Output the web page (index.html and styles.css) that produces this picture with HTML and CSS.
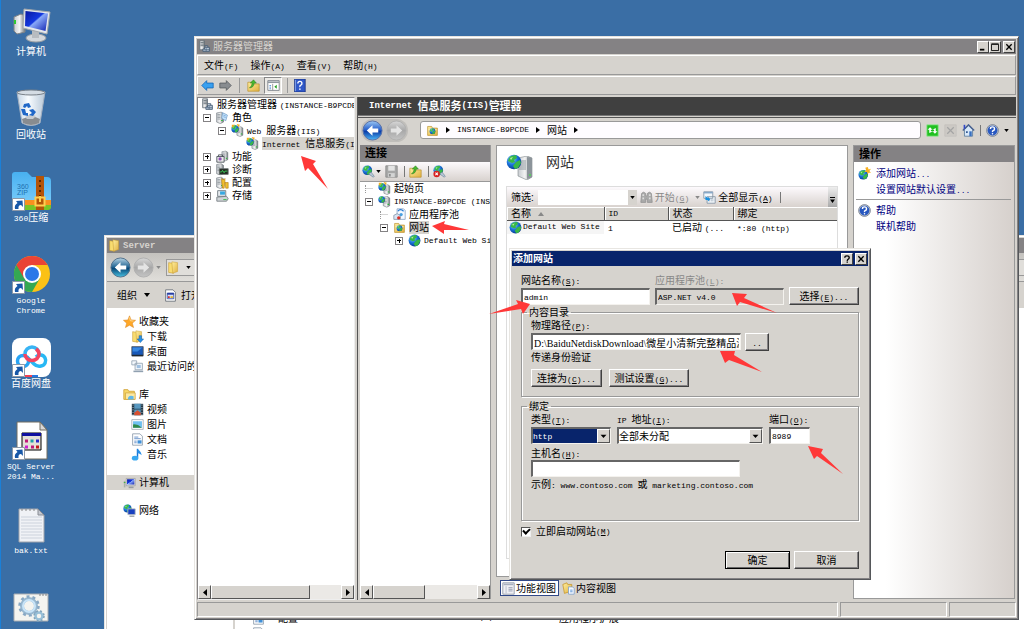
FILE: index.html
```html
<!DOCTYPE html>
<html lang="zh-CN">
<head>
<meta charset="utf-8">
<title>服务器管理器</title>
<link rel="stylesheet" href="styles.css">
</head>
<body>
<svg class="defs" aria-hidden="true">
  <defs>
    <linearGradient id="gBlue" x1="0" y1="0" x2="0" y2="1"><stop offset="0" stop-color="#9cc8f4"/><stop offset=".45" stop-color="#2a62cc"/><stop offset=".55" stop-color="#0c3ea8"/><stop offset="1" stop-color="#4cb8f8"/></linearGradient>
    <linearGradient id="gTeal" x1="0" y1="0" x2="0" y2="1"><stop offset="0" stop-color="#b8d4e4"/><stop offset=".45" stop-color="#2c6c98"/><stop offset=".55" stop-color="#084878"/><stop offset="1" stop-color="#48c0e0"/></linearGradient>
    <linearGradient id="gGrey" x1="0" y1="0" x2="0" y2="1"><stop offset="0" stop-color="#d8d8d8"/><stop offset=".5" stop-color="#a8a8a8"/><stop offset="1" stop-color="#c4c4c4"/></linearGradient>
    <linearGradient id="gScreen" x1="0" y1="0" x2="1" y2="1"><stop offset="0" stop-color="#0818a0"/><stop offset=".45" stop-color="#1438e0"/><stop offset=".5" stop-color="#88a8f8"/><stop offset="1" stop-color="#1020b0"/></linearGradient>
    <linearGradient id="gTower" x1="0" y1="0" x2="1" y2="0"><stop offset="0" stop-color="#c8ccd0"/><stop offset=".5" stop-color="#f4f4f4"/><stop offset="1" stop-color="#70787c"/></linearGradient>
    <linearGradient id="gFolder" x1="0" y1="0" x2="1" y2="1"><stop offset="0" stop-color="#fff0a0"/><stop offset="1" stop-color="#e0b040"/></linearGradient>
    <linearGradient id="gGlass" x1="0" y1="0" x2="1" y2="0"><stop offset="0" stop-color="#c4d4e4"/><stop offset=".4" stop-color="#f8fcff"/><stop offset="1" stop-color="#b8c8d8"/></linearGradient>
    <linearGradient id="gZip" x1="0" y1="0" x2="0" y2="1"><stop offset="0" stop-color="#48b0f0"/><stop offset="1" stop-color="#80d0fc"/></linearGradient>
    <radialGradient id="gGlobe" cx=".35" cy=".3" r=".8"><stop offset="0" stop-color="#90d8ff"/><stop offset=".5" stop-color="#1870d8"/><stop offset="1" stop-color="#083080"/></radialGradient>

    <symbol id="globe" viewBox="0 0 16 16"><circle cx="8" cy="8" r="7.3" fill="url(#gGlobe)"/><path d="M5 2l5-1 1 3-3 2 1 2-3 1-4-2 1-3zM10 8l4-2 1 3-3 5-3 1-2-3z" fill="#38b848"/><path d="M4 4l3-1-2 3z" fill="#b8f0a0"/></symbol>
    <symbol id="tower" viewBox="0 0 16 16"><path d="M4 2l6-1 3 2v11l-4 2-5-2z" fill="url(#gTower)" stroke="#606870" stroke-width=".7"/><path d="M5 4h4M5 6h4M5 8h4M5 10h4" stroke="#8a9298"/><path d="M10 12h2" stroke="#20c030" stroke-width="1.5"/></symbol>
    <symbol id="bigtower" viewBox="0 0 16 24"><path d="M1 2l9-2 5 2v19l-5 3-9-4z" fill="url(#gTower)" stroke="#80888c" stroke-width=".6"/><path d="M10 1v22l5-2V2z" fill="#8c949a"/><path d="M2 5h7M2 7h7M2 9h7M2 11h7M2 13h7" stroke="#90989e"/><path d="M12 19h2" stroke="#50d850" stroke-width="1.500"/></symbol>
    <symbol id="folder" viewBox="0 0 16 16"><path d="M2 3h5l1 2h6v9H2z" fill="url(#gFolder)" stroke="#b88c28" stroke-width=".8"/><path d="M3 7h10" stroke="#fff4b8"/></symbol>
    <symbol id="folders" viewBox="0 0 16 16"><path d="M2 2l6 1v12l-6-1z" fill="#f8dc70" stroke="#c09020" stroke-width=".6"/><path d="M6 1l7 1v11l-6 2z" fill="url(#gFolder)" stroke="#c89c30" stroke-width=".6"/></symbol>
    <symbol id="servers" viewBox="0 0 16 16"><path d="M2 1h6v11H2z" fill="url(#gTower)" stroke="#68727a"/><path d="M3 3h4M3 5h4M3 7h4" stroke="#58646c"/><path d="M8 9h6v5H6v-3h2zM8 7h4v2" fill="#b8c8d8" stroke="#405870"/><path d="M7 12h7M10 10v4" stroke="#506880"/></symbol>
    <symbol id="role" viewBox="0 0 16 16"><use href="#tower" x="-3" width="15" height="16"/><path d="M8 2l6 3-2 7-5-3z" fill="#c8e4fc" stroke="#6090c0" stroke-width=".8"/><path d="M9 5l3 1M9 7l3 1" stroke="#4080c0" stroke-width=".6"/></symbol>
    <symbol id="iis" viewBox="0 0 16 16"><use href="#tower" x="4" y="2" width="13" height="14"/><use href="#globe" x="0" y="1" width="10" height="10"/><path d="M1 1h4L1 5zM7 0l4 1-2 3z" fill="#f0b020"/></symbol>
    <symbol id="instance" viewBox="0 0 16 16"><use href="#tower" x="3" width="14" height="16"/><use href="#globe" x="0" y="1" width="9" height="9"/></symbol>
    <symbol id="feature" viewBox="0 0 16 16"><use href="#tower" x="4" width="13" height="14"/><path d="M1 8h9v7H1z" fill="#e8e8e8" stroke="#404850"/><path d="M3 8V6h5v2" fill="none" stroke="#404850"/><circle cx="5" cy="11" r="2" fill="#9050b8"/></symbol>
    <symbol id="diag" viewBox="0 0 16 16"><use href="#tower" x="-3" width="15" height="15"/><path d="M4 7h11v7H4z" fill="#202820" stroke="#687070"/><path d="M5 11h2l1-2 2 3 1-2h3" fill="none" stroke="#40e060"/></symbol>
    <symbol id="config" viewBox="0 0 16 16"><use href="#tower" x="-3" width="15" height="16"/><path d="M7 3l2 2 2-2v4l-1 8H8L7 7zM11 8h4v7h-3z" fill="#f0c030" stroke="#b07810" stroke-width=".7"/></symbol>
    <symbol id="storage" viewBox="0 0 16 16"><path d="M2 2h10v7H2z" fill="#e8ecf0" stroke="#68727a"/><path d="M5 3h6v4H5z" fill="#38a8e0"/><path d="M1 10l12-1 2 3-2 3H1z" fill="#d0d4d8" stroke="#70787c"/><path d="M9 13h4" stroke="#20c030"/></symbol>
    <symbol id="sites" viewBox="0 0 16 16"><use href="#folder" width="16" height="16"/><use href="#globe" x="4" y="5" width="8" height="8"/></symbol>
    <symbol id="pools" viewBox="0 0 16 16"><path d="M5 1h8l2 2v11H5z" fill="#f4f8ff" stroke="#7090b8" stroke-width=".8"/><path d="M6 4q3-4 7 0" fill="none" stroke="#2078d0" stroke-width="1.5"/><path d="M1 9l4-2 4 2v5H1z" fill="#d8e4f4" stroke="#8898a8"/><circle cx="7" cy="12" r="2" fill="#d83028"/><circle cx="10" cy="8" r="2" fill="#48a0e0"/></symbol>
    <symbol id="up" viewBox="0 0 16 16"><path d="M1 4h6l1 2h7v9H1z" fill="url(#gFolder)" stroke="#b88c28" stroke-width=".8"/><path d="M3 11q5 0 6-6h2.500L8 1 4 5h2.500Q6 9 3 11z" fill="#48b830" stroke="#287818" stroke-width=".6"/></symbol>
    <symbol id="left" viewBox="0 0 16 16"><path d="M1 8l6-6v3h8v6H7v3z" fill="#38a0f0" stroke="#1468b8"/></symbol>
    <symbol id="right" viewBox="0 0 16 16"><path d="M15 8L9 2v3H1v6h8v3z" fill="#888c90" stroke="#585c60"/></symbol>
    <symbol id="pane" viewBox="0 0 16 16"><path d="M1 2h14v12H1z" fill="#fff" stroke="#707880"/><path d="M1 4h14" stroke="#9098a0" stroke-width="2"/><path d="M3 8h2M3 10h2M3 12h2" stroke="#4080d0"/><path d="M7 6v8" stroke="#888"/><path d="M12 7v5l-3-2.500z" fill="#20a020"/></symbol>
    <symbol id="help" viewBox="0 0 16 16"><circle cx="8" cy="8" r="7.300" fill="#b8c0cc" stroke="#788090"/><circle cx="8" cy="8" r="6" fill="#2858c0"/><path d="M5.500 6q0-2.500 2.500-2.500T10.500 6q0 1.500-1.500 2T8 10" fill="none" stroke="#fff" stroke-width="1.700"/><circle cx="8" cy="12" r="1" fill="#fff"/></symbol>
    <symbol id="book" viewBox="0 0 16 16"><path d="M2 0h13v16H2z" fill="#3058c8" stroke="#183080"/><path d="M3 1v14" stroke="#90b0f0"/><path d="M6 5.500q0-2.500 2.500-2.500T11 5.500q0 1.500-1.500 2T8.500 10" fill="none" stroke="#fff" stroke-width="1.600"/><circle cx="8.500" cy="12.500" r="1" fill="#fff"/></symbol>
    <symbol id="connect" viewBox="0 0 16 16"><use href="#globe" width="13" height="13"/><path d="M8 11l3-2 2 2 2 3-1 1-3-2z" fill="#b8c8d8" stroke="#607890" stroke-width=".7"/></symbol>
    <symbol id="disconnect" viewBox="0 0 16 16"><use href="#connect" width="16" height="16"/><circle cx="4.500" cy="11" r="4" fill="#d82020"/><path d="M3 9.500l3 3m0-3l-3 3" stroke="#fff" stroke-width="1.300"/></symbol>
    <symbol id="save" viewBox="0 0 16 16"><path d="M1 1h14v14H1z" fill="#a8a8a8" stroke="#888"/><path d="M4 1h8v6H4z" fill="#e4e4e4"/><path d="M4 10h8v5H4z" fill="#d4d4d4"/><path d="M6 11v3" stroke="#888" stroke-width="2"/></symbol>
    <symbol id="refresh" viewBox="0 0 16 16"><path d="M1 1h14v14H1z" fill="#20c020" stroke="#90e890"/><path d="M4 11V7H2l3-3 3 3H6v2h3M12 5v4h2l-3 3-3-3h2V7H8" fill="#fff"/></symbol>
    <symbol id="stop" viewBox="0 0 16 16"><path d="M1 1h14v14H1z" fill="#ccc9c4" stroke="#c4c2be"/><path d="M4 4l8 8m0-8l-8 8" stroke="#a4a4a4" stroke-width="1.500"/></symbol>
    <symbol id="home" viewBox="0 0 16 16"><path d="M3 7l5-5 5 5v8H3z" fill="#d8e8f8" stroke="#587898"/><path d="M1 8l7-7 7 7" fill="none" stroke="#486090" stroke-width="1.700"/><path d="M3 1v5" stroke="#3048c8" stroke-width="2"/><path d="M9 9h3v6H9z" fill="#3870c0"/><path d="M5 9h2v2H5z" fill="#28508c"/></symbol>
    <symbol id="addsite" viewBox="0 0 16 16"><use href="#globe" y="3" width="13" height="13"/><path d="M12 0l1 3 3-1-2 3 2 2-3 0-1 2-1-3-3 0 2-2-1-3z" fill="#f8b020"/></symbol>
    <symbol id="find" viewBox="0 0 16 16"><path d="M2 3q2-3 5 0v3h2V3q3-3 5 0l1 11H9v-4H7v4H1z" fill="#aaa" stroke="#929292"/><path d="M3 9h2M11 9h2M3 5h2M11 5h2" stroke="#ddd" stroke-width="2"/></symbol>
    <symbol id="showall" viewBox="0 0 16 16"><path d="M1 1h11v8H1zM5 7h10v8H5z" fill="#f4f8fc" stroke="#8090a0"/><path d="M1 2h11" stroke="#88a8c8" stroke-width="2"/><path d="M7 10h7M7 12h7" stroke="#98a8b8" stroke-dasharray="2 1"/><path d="M3 6v5h3v2l3-3-3-3v2" fill="#1890e0"/></symbol>
    <symbol id="feat" viewBox="0 0 16 16"><path d="M1 1h14v14H1z" fill="#f0f0f4" stroke="#8890a0"/><path d="M2 3h12" stroke="#a8b0c0" stroke-width="2"/><path d="M5 5v9" stroke="#b0b8c8"/><path d="M8 7h5M8 9h5M8 11h5" stroke="#8890a8"/></symbol>
    <symbol id="content" viewBox="0 0 16 16"><path d="M1 3l5-2 1 2h5v8L3 14z" fill="url(#gFolder)" stroke="#c89830"/><path d="M8 6h5l2 2v7H8z" fill="#f4f8ff" stroke="#80a0c8"/><path d="M10 10h3M10 12h3" stroke="#4888d0"/></symbol>
    <symbol id="star" viewBox="0 0 16 16"><path d="M8 1l2 5 5.500.5-4 3.500 1.500 5.500L8 12.500 3 15.500 4.500 10 .5 6.500 6 6z" fill="#ffa828" stroke="#d88018" stroke-width=".6"/><path d="M8 3l1 4 4 .5" fill="none" stroke="#ffe0a0"/></symbol>
    <symbol id="download" viewBox="0 0 16 16"><use href="#folders" width="16" height="16"/><path d="M10 7h3v4h2.500l-4 4.500-4-4.500H10z" fill="#2890e8" stroke="#1060a8" stroke-width=".6"/></symbol>
    <symbol id="desk" viewBox="0 0 16 16"><path d="M1 2h14v11H1z" fill="#1858b8" stroke="#505860"/><path d="M2 3h12L8 8H2z" fill="#3888e0"/><path d="M1 13h14" stroke="#202830" stroke-width="2"/></symbol>
    <symbol id="recent" viewBox="0 0 16 16"><path d="M1 1h6v5H1zM5 4h9v8H5z" fill="#f4f8fc" stroke="#90a0b0"/><path d="M7 6h5v4H7z" fill="#a0c0e0"/><path d="M3 14h12" stroke="#90a0b0" stroke-width="2"/></symbol>
    <symbol id="library" viewBox="0 0 16 16"><path d="M1 2h5l1 2h7v10H1z" fill="#f8d868" stroke="#d0a030"/><path d="M3 6h12v8H3z" fill="#fce8a0" stroke="#d0a840"/><path d="M6 14q0-6 7-4v4" fill="#60b8e8"/></symbol>
    <symbol id="video" viewBox="0 0 16 16"><path d="M1 1h14v14H1z" fill="#203848"/><path d="M4 1h8v6H4zM4 8h8v7H4z" fill="#5898c0"/><path d="M4 12l4-3 4 3v3H4z" fill="#d85030"/><path d="M2.500 2v13M13.500 2v13" stroke="#fff" stroke-dasharray="1 2"/></symbol>
    <symbol id="picture" viewBox="0 0 16 16"><path d="M1 2h14v12H1z" fill="#fff" stroke="#a0a8b0"/><path d="M2.500 4h11v8h-11z" fill="#70c0f0"/><path d="M2.500 12V8q5-1 11 4z" fill="#308848"/></symbol>
    <symbol id="doc" viewBox="0 0 16 16"><path d="M2 1h9l3 3v11H2z" fill="#fff" stroke="#8898a8"/><path d="M4 5h5M4 7h8M4 10h3M4 12h3" stroke="#5080c0"/><path d="M8 9h5v4H8z" fill="#4090d8"/></symbol>
    <symbol id="music" viewBox="0 0 16 16"><path d="M8 1v11" stroke="#1878d8" stroke-width="1.800"/><path d="M8 1q5 4 5 8-1-2-5-3z" fill="#2890e8"/><ellipse cx="5" cy="12.500" rx="4" ry="3" fill="#38a8f0"/></symbol>
    <symbol id="pcsmall" viewBox="0 0 16 16"><path d="M4 3h11v9H4z" fill="#e8e8e8" stroke="#787c80" stroke-width=".6"/><path d="M5 4h9v6.500H5z" fill="url(#gScreen)"/><path d="M1 6h2v8H1z" fill="#a8b0a8"/><path d="M1 8h2" stroke="#30b030"/><path d="M7 14h6" stroke="#989ca0" stroke-width="2"/></symbol>
    <symbol id="network" viewBox="0 0 16 16"><use href="#globe" width="11" height="11"/><path d="M6 6h9v7H6z" fill="#1840c0" stroke="#b0b8c0"/><path d="M8 15h6" stroke="#90989c" stroke-width="1.500"/></symbol>
    <symbol id="app" viewBox="0 0 16 16"><path d="M2 1h9l3 3v11H2z" fill="#fff" stroke="#606870"/><path d="M4 5h8v7H4z" fill="#dce4f8" stroke="#3048a0"/><path d="M4 6h8" stroke="#2038a0" stroke-width="2"/><path d="M5 10h2" stroke="#d82020" stroke-width="2"/><path d="M8 10h3" stroke="#e0b020" stroke-width="2"/></symbol>
    <symbol id="shortcut" viewBox="0 0 13 13"><path d="M.5.5h12v12H.5z" fill="#fff" stroke="#8c98a8"/><path d="M3 11Q2 7 5.500 5L4 3l6.500-.5.500 6.500L9 7Q6 7 6.500 11z" fill="#1858a8"/></symbol>
    <symbol id="caret" viewBox="0 0 6 4"><path d="M0 0h6L3 4z"/></symbol>
    <symbol id="navback" viewBox="0 0 22 22"><circle cx="11" cy="11" r="10" fill="url(#gBlue)" stroke="#5870a8"/><path d="M5 11l6-5.500v3.500h6v4h-6v3.500z" fill="#fff"/></symbol>
    <symbol id="navteal" viewBox="0 0 22 22"><circle cx="11" cy="11" r="10" fill="url(#gTeal)" stroke="#50708c"/><path d="M5 11l6-5.500v3.500h6v4h-6v3.500z" fill="#fff"/></symbol>
    <symbol id="navfwd" viewBox="0 0 22 22"><circle cx="11" cy="11" r="10" fill="url(#gGrey)" stroke="#b0b0b0"/><path d="M17 11l-6-5.500v3.500H5v4h6v3.500z" fill="#e4e4e4"/></symbol>
  </defs>
</svg>

<main class="desktop">
  <ul class="shortcuts">
    <li>
      <svg class="big" viewBox="0 0 40 40"><path d="M3 12l7-3 4 2v16l-8 2-3-3z" fill="url(#gTower)" stroke="#808488"/><path d="M4 15v4" stroke="#30c830" stroke-width="2"/><ellipse cx="25" cy="33" rx="10" ry="4" fill="#d4d8dc" stroke="#9ca0a4"/><path d="M21 25l7 1v7h-7z" fill="#b8bcc0"/><path d="M13 4l26 3-3 22-24-6z" fill="#e4e8ec" stroke="#a4a8ac"/><path d="M14.500 6L37 8.500 34.500 26 14 21z" fill="url(#gScreen)"/></svg>
      <span class="name">计算机</span>
    </li>
    <li>
      <svg class="big" viewBox="0 0 40 40"><path d="M6 4l5 31q9 5 18 0l5-31z" fill="url(#gGlass)" stroke="#a4b0c0"/><path d="M11 31q10-5 18 0l-1 4q-8 4-16 0z" fill="#888c90"/><path d="M14 29q6-5 11-1l-3 3h-6z" fill="#c8ccd0"/><ellipse cx="20" cy="4.500" rx="14" ry="2.500" fill="#d4dce4" stroke="#788088"/><path d="M13 16l5-1 2 4-3 1-1-2-2 2-2-1zM10 21l4 0 1 4 2 0v3l-5-1zM18 22l4-1 3 3-3 4-4-1 3-2z" fill="#2068c8"/></svg>
      <span class="name">回收站</span>
    </li>
    <li>
      <svg class="big" viewBox="0 0 40 40"><path d="M1 4q0-3 3-3h12l5 5h15q4 0 4 4v25q0 3-3 3H1z" fill="url(#gZip)"/><path d="M1 29h39v5H1z" fill="#f89020"/><path d="M1 34h39v2q0 3-3 3H1z" fill="#78c428"/><path d="M25 5h8v34h-8z" fill="#b45408"/><path d="M29 9v18" stroke="#582800" stroke-width="2" stroke-dasharray="2 3"/><path d="M24.500 26.500h9v8h-9z" fill="none" stroke="#ffd050" stroke-width="2"/><path d="M29 25v6" stroke="#ffd050" stroke-width="2"/><text x="6" y="18" class="zip">360</text><text x="6" y="24" class="zip">ZIP</text><use href="#shortcut" x="1" y="27" width="13" height="13"/></svg>
      <span class="name"><span class="l">360</span>压缩</span>
    </li>
    <li>
      <svg class="big" viewBox="0 0 40 40"><circle cx="21" cy="20" r="18" fill="#fbc116"/><path d="M21 20L5.400 11A18 18 0 0 0 21 38l7.800-13.500z" fill="#34a853"/><path d="M5.400 11A18 18 0 0 1 36.600 11H21l-7.800 13.500z" fill="#ea4335"/><circle cx="21" cy="20" r="9" fill="#fff"/><circle cx="21" cy="20" r="7" fill="#2b78e8"/><use href="#shortcut" x="1" y="27" width="13" height="13"/></svg>
      <span class="name"><span class="l">Google<br>Chrome</span></span>
    </li>
    <li>
      <svg class="big" viewBox="0 0 40 40"><rect x="1" y="1" width="39" height="39" rx="8" fill="#fff"/><circle cx="12" cy="24" r="5.500" fill="none" stroke="#28a4f4" stroke-width="3.500"/><path d="M16 20l7 7q3 3 7 2a5.500 5.500 0 1 0-5-9" fill="none" stroke="#28b8f4" stroke-width="3.500"/><path d="M14 17a7 7 0 1 1 14 0" fill="none" stroke="#38b4f4" stroke-width="3.500"/><path d="M14 17a7 6.500 0 0 0 14 0q0-3-3-5" fill="none" stroke="#f44460" stroke-width="3.500"/><path d="M14 38h7v2h-7z" fill="#f04050"/><path d="M21 38h6v2h-6z" fill="#2878e0"/><use href="#shortcut" x="1" y="27" width="13" height="13"/></svg>
      <span class="name">百度网盘</span>
    </li>
    <li>
      <svg class="big" viewBox="0 0 40 40"><path d="M6 2h23l7 8v29H6z" fill="#fff" stroke="#706c60"/><path d="M29 2v8h7z" fill="#d8d8d8" stroke="#706c60"/><path d="M11 13h19v17H11z" fill="#e4e0d8" stroke="#000"/><path d="M11 14.500h19" stroke="#1010a0" stroke-width="3"/><g stroke-width="3"><path d="M14 21h3M20 27h3" stroke="#c01878"/><path d="M19.500 21h3" stroke="#20a0a8"/><path d="M25 21h3" stroke="#2828c8"/><path d="M14 27h3" stroke="#d020d0"/><path d="M25 27h3" stroke="#c01818"/></g><use href="#shortcut" x="1" y="27" width="13" height="13"/></svg>
      <span class="name"><span class="l">SQL Server<br>2014 Ma...</span></span>
    </li>
    <li>
      <svg class="big" viewBox="0 0 40 40"><path d="M8 6h19l6 6v27H8z" fill="#f0f2f6" stroke="#a0a4ac"/><path d="M27 6v6h6z" fill="#c4c8d0" stroke="#888c94"/><path d="M10 7h16" stroke="#888" stroke-dasharray="2 2"/><path d="M10 14h21M10 17h21M10 20h21M10 23h21M10 26h21M10 29h21M10 32h21M10 35h21" stroke="#ccd2dc"/></svg>
      <span class="name"><span class="l">bak.txt</span></span>
    </li>
    <li>
      <svg class="big" viewBox="0 0 40 40"><path d="M3 8h34v27H3z" fill="#f4f4f0" stroke="#a8acb0"/><path d="M28 9h8" stroke="#808488" stroke-dasharray="2 1"/><circle cx="18" cy="20" r="7" fill="none" stroke="#98b8d0" stroke-width="4"/><circle cx="18" cy="20" r="9.500" fill="none" stroke="#88a8c4" stroke-width="2.500" stroke-dasharray="3 3"/><circle cx="18" cy="20" r="6" fill="none" stroke="#c8e4f8" stroke-width="2"/><circle cx="28" cy="30" r="3.500" fill="none" stroke="#98c0d8" stroke-width="2.500"/><circle cx="28" cy="30" r="5" fill="none" stroke="#80a4bc" stroke-width="1.500" stroke-dasharray="2 2"/></svg>
    </li>
  </ul>

  <section class="window explorer" aria-label="Server">
    <header class="titlebar inactive"><svg class="ic"><use href="#folders"/></svg><span class="l title-latin">Server</span></header>
    <div class="ex-nav">
      <svg class="nav-ic"><use href="#navteal"/></svg><svg class="nav-ic"><use href="#navfwd"/></svg><svg class="caret faint"><use href="#caret"/></svg>
      <div class="ex-address"><svg class="ic"><use href="#folders"/></svg><svg class="caret"><use href="#caret"/></svg></div>
    </div>
    <div class="ex-tools"><button class="plain">组织</button><svg class="caret"><use href="#caret"/></svg><svg class="ic app"><use href="#app"/></svg><button class="plain">打开</button></div>
    <div class="ex-body">
      <nav class="ex-side">
        <ul>
          <li><svg class="ic"><use href="#star"/></svg>收藏夹</li>
          <li class="sub"><svg class="ic"><use href="#download"/></svg>下载</li>
          <li class="sub"><svg class="ic"><use href="#desk"/></svg>桌面</li>
          <li class="sub"><svg class="ic"><use href="#recent"/></svg>最近访问的位置</li>
        </ul>
        <ul>
          <li><svg class="ic"><use href="#library"/></svg>库</li>
          <li class="sub"><svg class="ic"><use href="#video"/></svg>视频</li>
          <li class="sub"><svg class="ic"><use href="#picture"/></svg>图片</li>
          <li class="sub"><svg class="ic"><use href="#doc"/></svg>文档</li>
          <li class="sub"><svg class="ic"><use href="#music"/></svg>音乐</li>
        </ul>
        <ul><li class="current"><svg class="ic"><use href="#pcsmall"/></svg>计算机</li></ul>
        <ul><li><svg class="ic"><use href="#network"/></svg>网络</li></ul>
      </nav>
      <div class="ex-files">
        <div class="file"><svg class="ic"><use href="#doc"/></svg><span>配置</span><span class="l">(x)</span><span>应用程序扩展</span></div>
        <div class="file"><svg class="ic"><use href="#doc"/></svg></div>
      </div>
    </div>
  </section>

  <section class="window manager" aria-label="服务器管理器">
    <header class="titlebar inactive"><svg class="ic"><use href="#servers"/></svg><span>服务器管理器</span>
      <div class="sysbuttons">
        <button aria-label="最小化"><svg viewBox="0 0 9 9"><path d="M1 7.500h5" stroke="#000" stroke-width="2"/></svg></button>
        <button aria-label="最大化"><svg viewBox="0 0 9 9"><path d="M.5 1.500h8v7h-8zM.5 1h8" fill="none" stroke="#000"/></svg></button>
        <button class="close" aria-label="关闭"><svg viewBox="0 0 9 9"><path d="M1.500 1.500l6 6m0-6l-6 6" stroke="#000" stroke-width="1.500"/></svg></button>
      </div>
    </header>
    <div class="menubar"><button class="plain">文件<span class="l">(F)</span></button><button class="plain">操作<span class="l">(A)</span></button><button class="plain">查看<span class="l">(V)</span></button><button class="plain">帮助<span class="l">(H)</span></button></div>
    <div class="toolbar">
      <svg class="ic"><use href="#left"/></svg><svg class="ic"><use href="#right"/></svg><i class="sep"></i><svg class="ic"><use href="#up"/></svg><span class="pressed"><svg class="ic"><use href="#pane"/></svg></span><i class="sep tight"></i><svg class="ic"><use href="#book"/></svg>
    </div>
    <div class="mg-body">
      <div class="pane mg-tree">
        <ul class="tree">
          <li><svg class="ic"><use href="#servers"/></svg><span>服务器管理器 <span class="l">(INSTANCE-B9PCDE)</span></span></li>
          <li class="d1"><i class="exp minus"></i><svg class="ic"><use href="#role"/></svg><span>角色</span></li>
          <li class="d2"><i class="exp minus"></i><svg class="ic"><use href="#iis"/></svg><span><span class="l">Web </span>服务器<span class="l">(IIS)</span></span></li>
          <li class="d3"><i class="exp none"></i><svg class="ic"><use href="#iis"/></svg><span class="picked"><span class="l">Internet </span>信息服务<span class="l">(IIS)</span></span></li>
          <li class="d1"><i class="exp plus"></i><svg class="ic"><use href="#feature"/></svg><span>功能</span></li>
          <li class="d1"><i class="exp plus"></i><svg class="ic"><use href="#diag"/></svg><span>诊断</span></li>
          <li class="d1"><i class="exp plus"></i><svg class="ic"><use href="#config"/></svg><span>配置</span></li>
          <li class="d1"><i class="exp plus"></i><svg class="ic"><use href="#storage"/></svg><span>存储</span></li>
        </ul>
        <div class="hscroll wide"><button aria-label="向左"><svg viewBox="0 0 4 7"><path d="M4 0v7L0 3.500z"/></svg></button><i class="thumb"></i><button aria-label="向右"><svg viewBox="0 0 4 7"><path d="M0 0v7l4-3.500z"/></svg></button></div>
      </div>
      <div class="iis">
        <h1 class="iis-title"><span class="l">Internet </span>信息服务<span class="l">(IIS)</span>管理器</h1>
        <div class="iis-nav">
          <div class="pair"><svg class="nav-ic"><use href="#navback"/></svg><svg class="nav-ic"><use href="#navfwd"/></svg></div>
          <div class="crumbs"><svg class="ic"><use href="#sites"/></svg><i class="tri"></i><span class="l">INSTANCE-B9PCDE</span><i class="tri"></i><span>网站</span><i class="tri"></i></div>
          <svg class="ic"><use href="#refresh"/></svg><svg class="ic"><use href="#stop"/></svg><svg class="ic"><use href="#home"/></svg><i class="bar"></i><svg class="ic"><use href="#help"/></svg><svg class="caret"><use href="#caret"/></svg>
        </div>
        <div class="iis-cols">
          <div class="conn">
            <h2 class="panel-title">连接</h2>
            <div class="conn-tools"><svg class="ic"><use href="#connect"/></svg><svg class="caret"><use href="#caret"/></svg><svg class="ic"><use href="#save"/></svg><i class="bar"></i><svg class="ic"><use href="#up"/></svg><i class="bar"></i><svg class="ic"><use href="#disconnect"/></svg></div>
            <ul class="tree dotted">
              <li class="d1"><i class="exp none"></i><svg class="ic"><use href="#iis"/></svg><span>起始页</span></li>
              <li class="d1"><i class="exp minus"></i><svg class="ic"><use href="#instance"/></svg><span class="l">INSTANCE-B9PCDE (INSTANCE)</span></li>
              <li class="d2"><i class="exp none"></i><svg class="ic"><use href="#pools"/></svg><span>应用程序池</span></li>
              <li class="d2"><i class="exp minus"></i><svg class="ic"><use href="#sites"/></svg><span class="picked fit">网站</span></li>
              <li class="d3"><i class="exp plus"></i><svg class="ic"><use href="#globe"/></svg><span class="l">Default Web Site</span></li>
            </ul>
            <div class="hscroll"><button aria-label="向左"><svg viewBox="0 0 4 7"><path d="M4 0v7L0 3.500z"/></svg></button><i class="thumb"></i><button aria-label="向右"><svg viewBox="0 0 4 7"><path d="M0 0v7l4-3.500z"/></svg></button></div>
          </div>
          <div class="center">
            <div class="sheet">
              <div class="sheet-head"><svg viewBox="0 0 28 28"><use href="#bigtower" x="11" y="3" width="16" height="24"/><use href="#globe" x="0" y="1" width="16" height="16"/></svg><h2>网站</h2></div>
              <div class="list">
                <div class="filter"><label for="filter">筛选:</label><span class="filter-box"><input id="filter" type="text"><button aria-label="展开"><svg class="caret"><use href="#caret"/></svg></button></span><svg class="ic"><use href="#find"/></svg><span class="dim">开始<span class="l">(<u>G</u>)</span></span><svg class="caret dimcaret"><use href="#caret"/></svg><svg class="ic"><use href="#showall"/></svg><span>全部显示<span class="l">(<u>A</u>)</span></span><i class="bar"></i><button class="more" aria-label="更多"><svg viewBox="0 0 6 7"><path d="M0 0h6v1H0zM0 3h6L3 7z"/></svg></button></div>
                <table>
                  <thead><tr><th class="c-name">名称 <svg class="sort" viewBox="0 0 6 4"><path d="M0 4h6L3 0z"/></svg></th><th class="c-id"><span class="l">ID</span></th><th class="c-state">状态</th><th>绑定</th></tr></thead>
                  <tbody><tr><td><div class="cell"><svg class="ic"><use href="#globe"/></svg><span class="l">Default Web Site</span></div></td><td><span class="l">1</span></td><td>已启动 <span class="l">(...</span></td><td><span class="l">*:80 (http)</span></td></tr></tbody>
                </table>
              </div>
            </div>
            <div class="views"><button class="view on"><svg class="ic"><use href="#feat"/></svg>功能视图</button><button class="view"><svg class="ic"><use href="#content"/></svg>内容视图</button></div>
          </div>
          <aside class="actions">
            <h2 class="panel-title">操作</h2>
            <ul>
              <li><svg class="ic"><use href="#addsite"/></svg><a href="#add">添加网站<span class="l">...</span></a></li>
              <li class="noicon"><a href="#defaults">设置网站默认设置<span class="l">...</span></a></li>
            </ul>
            <ul>
              <li><svg class="ic"><use href="#help"/></svg><a href="#help-topics">帮助</a></li>
              <li class="noicon"><a href="#online">联机帮助</a></li>
            </ul>
          </aside>
        </div>
      </div>
    </div>
    <footer class="status"><i></i><i></i><i></i></footer>
  </section>

  <form class="window dialog" aria-label="添加网站">
    <header class="titlebar active"><span>添加网站</span>
      <div class="sysbuttons"><button type="button" aria-label="帮助"><svg viewBox="0 0 9 9"><path d="M2 3q0-2 2.500-2T7 3q0 1-1.500 2l-1 1.500" fill="none" stroke="#000" stroke-width="1.500"/><path d="M4 8h1.500" stroke="#000" stroke-width="1.500"/></svg></button><button type="button" class="close" aria-label="关闭"><svg viewBox="0 0 9 9"><path d="M1.500 1.500l6 6m0-6l-6 6" stroke="#000" stroke-width="1.500"/></svg></button></div>
    </header>
    <div class="dlg-body">
      <div class="row top">
        <div class="field"><label for="site">网站名称<span class="l">(<u>S</u>):</span></label><input id="site" class="latin" type="text" value="admin"></div>
        <div class="field"><label class="dim" for="pool">应用程序池<span class="l">(<u>L</u>):</span></label><input id="pool" class="latin" type="text" value="ASP.NET v4.0" readonly></div>
        <button type="button" class="btn pick">选择<span class="l">(<u>E</u>)...</span></button>
      </div>
      <fieldset class="dir">
        <legend>内容目录</legend>
        <label for="path">物理路径<span class="l">(<u>P</u>):</span></label>
        <div class="row path"><input id="path" type="text" value="D:\BaiduNetdiskDownload\微星小清新完整精品源码"><button type="button" class="btn dots"><span class="l">..</span></button></div>
        <p>传递身份验证</p>
        <div class="row auth"><button type="button" class="btn as">连接为<span class="l">(<u>C</u>)...</span></button><button type="button" class="btn test">测试设置<span class="l">(<u>G</u>)...</span></button></div>
      </fieldset>
      <fieldset class="bind">
        <legend>绑定</legend>
        <div class="row binds">
          <div class="field type"><label for="type">类型<span class="l">(<u>T</u>):</span></label><div class="combo hot"><select id="type"><option>http</option></select><svg viewBox="0 0 13 13"><path d="M3 5h7L6.500 9z"/></svg></div></div>
          <div class="field ip"><label for="ip"><span class="l">IP </span>地址<span class="l">(<u>I</u>):</span></label><div class="combo"><select id="ip"><option>全部未分配</option></select><svg viewBox="0 0 13 13"><path d="M3 5h7L6.500 9z"/></svg></div></div>
          <div class="field port"><label for="port">端口<span class="l">(<u>O</u>):</span></label><input id="port" class="latin" type="text" value="8989"></div>
        </div>
        <div class="field host"><label for="host">主机名<span class="l">(<u>H</u>):</span></label><input id="host" type="text"></div>
        <p>示例<span class="l">: www.contoso.com </span>或<span class="l"> marketing.contoso.com</span></p>
      </fieldset>
      <label class="check"><input type="checkbox" checked>立即启动网站<span class="l">(<u>M</u>)</span></label>
      <div class="row ends"><button type="button" class="btn ok">确定</button><button type="button" class="btn">取消</button></div>
    </div>
  </form>

  <svg class="arrows" viewBox="0 0 1024 629" aria-hidden="true">
    <path d="M301 156l15 5-3 3 15 25-20-21-3 3zM432 226l13-5-1 3 25 6-25 0 0 4zM732 293l15 1-3 4 33 15-37-11-3 4zM530 304l-7 10-2-5-32 5 29-10-2-4zM720 351l15 0-1 4 28 17-33-12-4 3zM808 446l15 3-2 4 22 21-26-18-3 3z"/>
  </svg>
</main>
</body>
</html>
```
FILE: styles.css
```css
* { box-sizing: border-box; }
body, ul, h1, h2, p, fieldset { margin: 0; padding: 0; }
body, button, input, select {
  font-family: "Liberation Sans", "Noto Sans CJK SC", sans-serif;
  font-size: 10px;
  line-height: 13px;
  color: #000;
}
body { overflow: hidden; }
ul { list-style: none; }
i { font-style: normal; }
button { padding: 0; border: 0; background: none; white-space: nowrap; }
h1, h2 { font-size: 11px; }
.l { font-family: "Liberation Mono", monospace; font-size: 8px; line-height: 10px; white-space: pre; }
.defs { position: absolute; width: 0; height: 0; }
.ic { width: 13px; height: 13px; flex: none; }
.caret { width: 5px; height: 3px; flex: none; }
.nav-ic { width: 21px; height: 21px; flex: none; }
.bar { width: 1px; height: 11px; background: #777; flex: none; }
.row { display: flex; }
.dim { color: #888; }

.desktop {
  position: relative;
  height: 100vh;
  overflow: hidden;
  background: #3a6ea5;
  border-left: 1px solid #1a80d8;
}

/* desktop shortcuts */
.shortcuts { width: 60px; padding-top: 5px; display: grid; grid-auto-rows: 83px; }
.shortcuts li { display: flex; flex-direction: column; align-items: center; }
.big { width: 40px; height: 40px; flex: none; }
.name { margin-top: 2px; line-height: 10px; color: #fff; text-align: center; }
.name > .l:only-child { display: inline-block; }
.zip { font: 7px "Liberation Sans", sans-serif; fill: #2070b0; }

/* windows */
.window {
  position: absolute;
  display: flex;
  flex-direction: column;
  padding: 2px;
  background: #d6d3ce;
  border: 1px solid;
  border-color: #e8e6e2 #55575a #55575a #e8e6e2;
  box-shadow: inset 1px 1px #fff, inset -1px -1px #848284;
}
.titlebar { display: flex; align-items: center; flex: none; height: 15px; padding: 0 1px; gap: 2px; }
.inactive { background: #848284; color: #d6d3ce; }
.active { background: #08246b; color: #fff; font-weight: bold; }
.sysbuttons { display: flex; margin-left: auto; }
.sysbuttons button {
  width: 12px; height: 12px;
  display: grid; place-items: center;
  background: #d6d3ce;
  border: 1px solid; border-color: #fff #404040 #404040 #fff;
}
.sysbuttons svg { width: 8px; height: 8px; }
.sysbuttons .close { margin-left: 2px; }

/* explorer */
.explorer { left: 103px; top: 235px; right: -20px; bottom: -20px; }
.title-latin { font-size: 9px; font-weight: bold; }
.ex-nav { display: flex; align-items: center; height: 29px; padding: 0 3px; gap: 2px; flex: none; background: linear-gradient(#c4c2be, #e0deda); border-bottom: 1px solid #999; }
.faint { fill: #888; }
.ex-address { display: flex; align-items: center; flex: 1; height: 17px; margin-left: 3px; gap: 6px; background: #e0deda; border: 1px solid #999; }
.ex-tools { display: flex; align-items: center; flex: none; height: 26px; padding-left: 10px; gap: 7px; }
.ex-tools .app { margin: 0 -3px 0 7px; }
.ex-tools .plain + .caret { width: 6px; height: 4px; }
.ex-body { display: flex; flex: 1; min-height: 0; background: #fff; }
.ex-side { width: 128px; padding-top: 6px; border-right: 2px solid #d6d3ce; }
.ex-side ul { margin-bottom: 13px; }
.ex-side li { display: flex; align-items: center; gap: 3px; height: 15px; padding-left: 16px; white-space: nowrap; }
.ex-side .sub { padding-left: 24px; }
.ex-side .current { background: #d6d3ce; }
.ex-files { flex: 1; display: flex; flex-direction: column; justify-content: flex-end; padding: 0 0 4px 17px; }
.file { display: grid; grid-template-columns: 26px 201px 80px 1fr; height: 15px; }

/* server manager */
.manager { left: 193px; top: 36px; right: 5px; bottom: 9px; }
.manager .titlebar { gap: 2px; }
.menubar, .toolbar { display: flex; align-items: center; flex: none; height: 20px; margin-top: 1px; border: 1px solid; border-color: #fff #999 #999 #fff; }
.menubar { gap: 12px; padding-left: 6px; }
.toolbar { gap: 5px; padding-left: 3px; height: 19px; }
.sep { width: 1px; height: 15px; margin: 0 2px; background: #999; }
.tight { margin: 0; }
.pressed { display: grid; place-items: center; width: 18px; height: 17px; margin-left: -1px; background: #eceae6; border: 1px solid; border-color: #888 #fff #fff #888; }
.mg-body { display: grid; grid-template-columns: 158px minmax(0, 1fr); gap: 2px; flex: 1; min-height: 0; margin-top: 2px; }
.pane { background: #fff; border: 1px solid; border-color: #848284 #eee #eee #848284; }
.mg-tree { display: flex; flex-direction: column; min-width: 0; }
.tree { flex: 1; overflow: hidden; }
.tree li { display: flex; align-items: center; gap: 3px; height: 13px; padding-left: 3px; white-space: nowrap; }
.tree .d1 { padding-left: 5px; }
.tree .d2 { padding-left: 20px; }
.tree .d3 { padding-left: 35px; }
.exp { display: block; width: 8px; height: 8px; margin: 0 2px 0 0; flex: none; border: 1px solid #848284; background: linear-gradient(#000, #000) center / 4px 1px no-repeat, #fff; }
.plus { background: linear-gradient(#000, #000) center / 4px 1px no-repeat, linear-gradient(#000, #000) center / 1px 4px no-repeat, #fff; }
.exp.none { border: 0; background: none; }
.dotted .none { border-left: 1px dotted #999; background: linear-gradient(90deg, #aaa 50%, transparent 50%) center / 2px 1px repeat-x; }
.picked { background: #d6d3ce; flex: 1; }
.fit { flex: none; }
.hscroll { display: flex; height: 14px; flex: none; background: #ebe9e6; }
.hscroll button, .thumb { width: 13px; background: #d6d3ce; border: 1px solid; border-color: #fff #555 #555 #fff; display: grid; place-items: center; }
.hscroll svg { width: 4px; height: 7px; }
.hscroll .thumb { width: 52px; margin-right: auto; }
.wide .thumb { width: 99px; }

.iis { display: flex; flex-direction: column; min-width: 0; border-left: 1px solid #555; }
.iis-title { display: flex; align-items: center; flex: none; height: 19px; padding-left: 11px; background: #404040; color: #fff; border-bottom: 1px solid #777; }
.iis-title .l { font-size: 9px; }
.iis-nav { display: flex; align-items: center; flex: none; height: 28px; margin-top: 1px; padding: 0 7px 3px 3px; gap: 5px; border-top: 1px solid #555; }
.pair { display: flex; gap: 3px; padding: 1px; border-radius: 12px; background: #c0beba; margin-right: 7px; }
.crumbs { display: flex; align-items: center; flex: 1; height: 18px; padding-left: 5px; gap: 7px; background: #fefcff; border: 1px solid #999; border-radius: 3px; }
.tri { width: 0; height: 0; border: 3px solid transparent; border-left: 4px solid #000; border-right: 0; }
.iis-cols { display: grid; grid-template-columns: 131px minmax(0, 1fr) 162px; gap: 5px; flex: 1; min-height: 0; padding: 0 1px 1px 2px; }
.conn { display: flex; flex-direction: column; min-width: 0; background: #fff; border-right: 1px solid #999; }
.panel-title { flex: none; height: 17px; padding-left: 5px; line-height: 17px; background: #848284; color: #000; }
.conn-tools { display: flex; align-items: center; flex: none; height: 20px; padding-left: 2px; gap: 4px; background: linear-gradient(#fdfafd, #d8d2ce); border-bottom: 1px solid #999; }
.conn-tools .caret { margin-left: -3px; }
.conn-tools .bar { margin-left: 2px; }
.center { display: flex; flex-direction: column; min-width: 0; }
.sheet { flex: 1; padding: 7px 9px 0; background: #fff; border: 1px solid #999; }
.sheet-head { display: flex; gap: 12px; height: 33px; }
.sheet-head svg { width: 28px; height: 28px; }
.sheet-head h2 { font-size: 14px; font-weight: normal; line-height: 18px; color: #333; }
.list { height: calc(100% - 50px); border: 1px solid #ddd; }
.filter { display: flex; align-items: center; height: 20px; padding-left: 4px; gap: 2px; background: linear-gradient(#fdfafd, #d8d2ce); white-space: nowrap; }
.filter-box { display: flex; width: 99px; height: 15px; margin-left: 2px; background: #fff; }
.filter-box button { width: 9px; background: #d6d3ce; display: grid; place-items: center; flex: none; }
.filter .ic { margin-left: 1px; }
.dimcaret { fill: #888; margin: 0 0 0 4px; }
.filter .bar { margin-left: 5px; }
.more { align-self: stretch; width: 9px; margin-left: auto; background: linear-gradient(#eee, #aaa); }
.more svg { width: 5px; height: 6px; margin-top: 8px; }
table { width: 100%; border-collapse: collapse; table-layout: fixed; }
th { height: 13px; padding: 0 4px; line-height: 11px; text-align: left; font-weight: normal; background: #d6d3ce; border-right: 1px solid #555; border-bottom: 1px solid #555; box-shadow: inset 1px 1px #fff; }
th:last-child { border-right: 0; }
td { height: 14px; padding: 0 4px; white-space: nowrap; overflow: hidden; }
td:first-child { padding: 0 2px; background: #f5f5f5; }
.cell { display: flex; align-items: center; gap: 1px; }
.c-name { width: 97px; }
.c-id { width: 64px; }
.c-state { width: 65px; }
.sort { width: 6px; height: 4px; margin-left: 4px; fill: #888; vertical-align: middle; }
.views { display: flex; gap: 1px; flex: none; padding: 3px 4px; height: 22px; }
.view { display: flex; align-items: center; gap: 1px; padding: 0 2px 0 1px; border: 1px solid transparent; }
.view.on { background: #fff; border-color: #304888; }
.actions { background: linear-gradient(90deg, #fff 20%, #d6d0cc); border: 1px solid #999; }
.actions .panel-title { height: 16px; line-height: 16px; }
.actions ul { display: grid; gap: 1px; padding: 4px 4px 2px; }
.actions ul + ul { margin: 0 3px 0 2px; padding: 3px 2px; border-top: 1px solid #999; }
.actions li { display: flex; align-items: center; gap: 5px; height: 15px; }
.actions .noicon { padding-left: 18px; }
.actions a { color: #000080; text-decoration: none; }
.status { display: grid; grid-template-columns: 1fr 107px 67px; gap: 2px; flex: none; height: 15px; margin-top: 2px; }
.status i { border: 1px solid; border-color: #999 #fff #fff #999; }

/* add-site dialog */
.dialog { left: 508px; top: 248px; width: 362px; }
.dlg-body { padding: 8px 9px 8px 9px; }
.dlg-body label, .dlg-body p { display: block; height: 13px; white-space: nowrap; }
input[type="text"] { width: 100%; height: 17px; padding: 0 1px; background: #fff; border: 2px solid; border-width: 2px 1px 1px 2px; border-color: #666 #f4f2ee #f4f2ee #666; border-radius: 0; outline: 0; }
.filter-box input[type="text"] { flex: 1; min-width: 0; height: 15px; border: 0; }
input.latin { font-family: "Liberation Mono", monospace; font-size: 8px; }
#pool { background: #d6d3ce; }
#path { font-family: "Liberation Serif", "Noto Sans CJK SC", serif; }
.field { display: flex; flex-direction: column; min-width: 0; }
.btn { background: #d6d3ce; border: 1px solid; border-color: #fff #404040 #404040 #fff; box-shadow: inset -1px -1px #848284; height: 18px; width: 65px; }
.top { gap: 5px; align-items: flex-end; }
.top .field { flex: 1; gap: 1px; }
.top .pick { width: 70px; }
fieldset { min-width: 0; border: 1px solid #999; box-shadow: 1px 1px #fff, inset 1px 1px #fff; padding: 0 8px 0 9px; }
legend { padding: 0 2px; margin-left: -4px; line-height: 13px; }
.dir { margin-top: 1px; height: 91px; }
.path { gap: 4px; margin-top: 1px; }
#path { width: 210px; }
.dots { width: 24px; }
.auth { gap: 7px; margin-top: 5px; }
.as { width: 71px; }
.test { width: 80px; }
.bind { margin-top: 3px; height: 121px; }
.binds { gap: 6px; }
.binds .field { gap: 1px; }
.type { width: 80px; }
.ip { width: 146px; }
.port { width: 41px; }
.combo { position: relative; height: 17px; background: #fff; border: 2px solid; border-width: 2px 1px 1px 2px; border-color: #666 #f4f2ee #f4f2ee #666; }
.combo select { appearance: none; display: block; width: 100%; height: 14px; padding: 0; border: 0; border-radius: 0; background: transparent; line-height: 13px; outline: 0; }
.combo.hot select { background: #08246b; color: #fff; font-family: "Liberation Mono", monospace; font-size: 8px; }
.combo svg { position: absolute; right: 0; top: 0; width: 13px; height: 14px; background: #d6d3ce; border: 1px solid; border-color: #fff #555 #555 #fff; pointer-events: none; }
.host { margin-top: 3px; width: 209px; }
.bind p { margin-top: 1px; }
.dlg-body .check { display: flex; align-items: center; margin-top: 4px; }
.check input { appearance: none; display: grid; place-items: center; width: 10px; height: 10px; margin: 0 5px 0 0; background: #fff; border: 1px solid; border-color: #555 #eee #eee #555; }
.check input:checked::before { content: ""; width: 5px; height: 3px; margin-bottom: 2px; border: solid #000; border-width: 0 0 2px 2px; transform: rotate(-45deg); }
.ends { justify-content: flex-end; gap: 4px; margin-top: 13px; }
.ok { border-color: #000; box-shadow: inset 1px 1px #fff, inset -1px -1px #666; }

.arrows { position: absolute; left: -1px; top: 0; width: 1024px; height: 629px; fill: #ff3838; pointer-events: none; }
```
